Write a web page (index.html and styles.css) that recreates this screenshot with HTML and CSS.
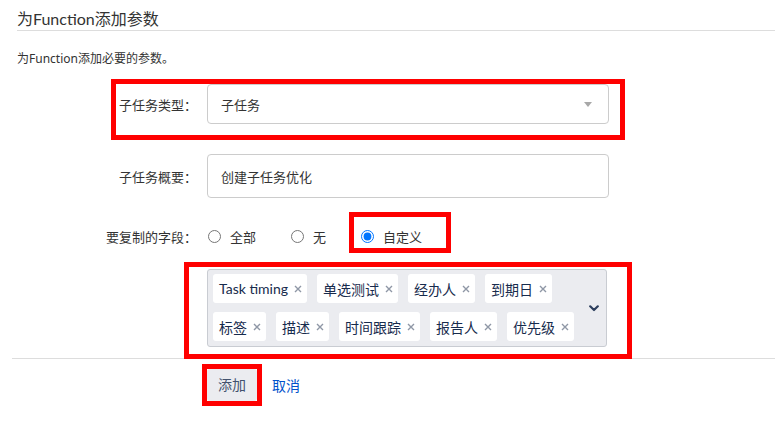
FILE: index.html
```html
<!DOCTYPE html>
<html lang="zh-CN">
<head>
<meta charset="utf-8">
<title>为Function添加参数</title>
<link rel="stylesheet" href="styles.css">
</head>
<body>
<div class="page">
  <h2 class="title">为Function添加参数</h2>
  <p class="desc">为Function添加必要的参数。</p>
  <div class="form">
    <div class="row row-type">
      <span class="label">子任务类型：</span>
      <div class="select mark mark-type">子任务<span class="caret"></span></div>
    </div>
    <div class="row row-summary">
      <span class="label">子任务概要：</span>
      <div class="input">创建子任务优化</div>
    </div>
    <div class="row row-radios">
      <span class="label">要复制的字段：</span>
      <div class="radios">
        <label class="option"><input type="radio" name="copy"><span>全部</span></label>
        <label class="option"><input type="radio" name="copy"><span>无</span></label>
        <label class="option mark mark-radio"><input type="radio" name="copy" checked><span>自定义</span></label>
      </div>
    </div>
    <div class="row row-multi">
      <span class="label"></span>
      <div class="multi mark mark-multi">
        <div class="tags">
          <span class="tag">Task timing<svg class="x" width="8" height="8" viewBox="0 0 8 8"><path d="M1 1 L7 7 M7 1 L1 7"/></svg></span>
          <span class="tag">单选测试<svg class="x" width="8" height="8" viewBox="0 0 8 8"><path d="M1 1 L7 7 M7 1 L1 7"/></svg></span>
          <span class="tag">经办人<svg class="x" width="8" height="8" viewBox="0 0 8 8"><path d="M1 1 L7 7 M7 1 L1 7"/></svg></span>
          <span class="tag">到期日<svg class="x" width="8" height="8" viewBox="0 0 8 8"><path d="M1 1 L7 7 M7 1 L1 7"/></svg></span>
          <span class="tag">标签<svg class="x" width="8" height="8" viewBox="0 0 8 8"><path d="M1 1 L7 7 M7 1 L1 7"/></svg></span>
          <span class="tag">描述<svg class="x" width="8" height="8" viewBox="0 0 8 8"><path d="M1 1 L7 7 M7 1 L1 7"/></svg></span>
          <span class="tag">时间跟踪<svg class="x" width="8" height="8" viewBox="0 0 8 8"><path d="M1 1 L7 7 M7 1 L1 7"/></svg></span>
          <span class="tag">报告人<svg class="x" width="8" height="8" viewBox="0 0 8 8"><path d="M1 1 L7 7 M7 1 L1 7"/></svg></span>
          <span class="tag">优先级<svg class="x" width="8" height="8" viewBox="0 0 8 8"><path d="M1 1 L7 7 M7 1 L1 7"/></svg></span>
        </div>
        <div class="chevron">
          <svg width="10" height="7" viewBox="0 0 10 7"><path d="M1.2 1.3 L5 5 L8.8 1.3" fill="none" stroke="#2c3e5d" stroke-width="2.2" stroke-linecap="round" stroke-linejoin="round"/></svg>
        </div>
      </div>
    </div>
  </div>
  <div class="footer">
    <span class="btn-wrap"><button class="btn">添加</button></span>
    <a class="link" href="#">取消</a>
  </div>
</div>
</body>
</html>
```

FILE: styles.css
```css
* { box-sizing: border-box; }
html, body { margin: 0; padding: 0; background: #fff; }
body {
  font-family: "Lato", "Noto Sans CJK SC", sans-serif;
  color: #333;
}
.page { padding: 0 0 20px 17px; }

.title {
  margin: 8px 0 0;
  font-size: 16px;
  line-height: 22px;
  font-weight: normal;
  color: #333;
  border-bottom: 1px solid #ddd;
}
.desc {
  margin: 19px 0 0;
  font-family: "Noto Sans", "Noto Sans CJK SC", sans-serif;
  font-size: 12px;
  line-height: 18px;
  color: #333;
}

.form { margin-top: 16px; }
.row {
  display: grid;
  grid-template-columns: 180px 402px;
  column-gap: 10px;
  align-items: center;
}
.label {
  text-align: right;
  font-size: 13px;
  color: #333;
  white-space: nowrap;
}
.row-summary { margin-top: 30px; }
.row-radios { margin-top: 28px; }
.row-multi { margin-top: 23px; }

.select, .input {
  border: 1px solid #ccc;
  border-radius: 4px;
  font-size: 13px;
  color: #333;
  padding-left: 13px;
  display: flex;
  align-items: center;
}
.select { height: 40px; position: relative; }
.input { height: 44px; }
.caret {
  position: absolute;
  right: 16px;
  top: 17px;
  width: 0; height: 0;
  border-left: 4.5px solid transparent;
  border-right: 4.5px solid transparent;
  border-top: 5px solid #a8a8a8;
}

.radios { display: flex; align-items: center; height: 20px; }
.option {
  display: flex;
  align-items: center;
  font-size: 13px;
  color: #333;
  margin-right: 34px;
  height: 20px;
}
.option input {
  width: 13px; height: 13px;
  margin: 0 9px 0 1px;
}

.multi {
  width: 400px;
  height: 78px;
  background: #ebecf0;
  border: 1px solid #c9ccd2;
  border-radius: 3px;
  display: flex;
}
.tags {
  flex: 1;
  display: flex;
  flex-wrap: wrap;
  align-content: flex-start;
  column-gap: 10px;
  row-gap: 9px;
  padding: 4px 0 0 5px;
}
.tag {
  display: inline-flex;
  align-items: center;
  height: 29px;
  background: #fff;
  border-radius: 3px;
  padding: 0 5px 0 6px;
  font-size: 14px;
  color: #172b4d;
  white-space: nowrap;
}
.x {
  margin-left: 6px;
  flex: none;
}
.x path {
  stroke: #8f97a6;
  stroke-width: 1.4;
  fill: none;
}
.chevron {
  width: 24px;
  flex: none;
  display: flex;
  align-items: center;
  justify-content: center;
}

.footer {
  margin-top: 11px;
  margin-left: -5px;
  border-top: 1px solid #ddd;
  padding: 5px 0 0 190px;
  display: flex;
  align-items: center;
}
.btn-wrap {
  display: block;
  border: 5px solid #f00;
  line-height: 0;
}
.btn {
  display: block;
  height: 32px;
  width: 50px;
  border: none;
  border-radius: 3px;
  background: #ebecf0;
  color: #42526e;
  font-family: "Lato", "Noto Sans CJK SC", sans-serif;
  font-size: 14px;
  line-height: 32px;
  padding: 0;
}
.link {
  margin-left: 10px;
  color: #0052cc;
  font-size: 14px;
  text-decoration: none;
}

.mark { position: relative; }
.mark::after {
  content: "";
  position: absolute;
  border: 5px solid #f00;
  pointer-events: none;
}
.mark-type::after { top: -6px; bottom: -17px; left: -97px; right: -17px; }
.mark-radio::after { top: -14px; bottom: -7px; left: -11px; right: -29px; }
.mark-multi::after { top: -8px; bottom: -13px; left: -24px; right: -26px; }
```
